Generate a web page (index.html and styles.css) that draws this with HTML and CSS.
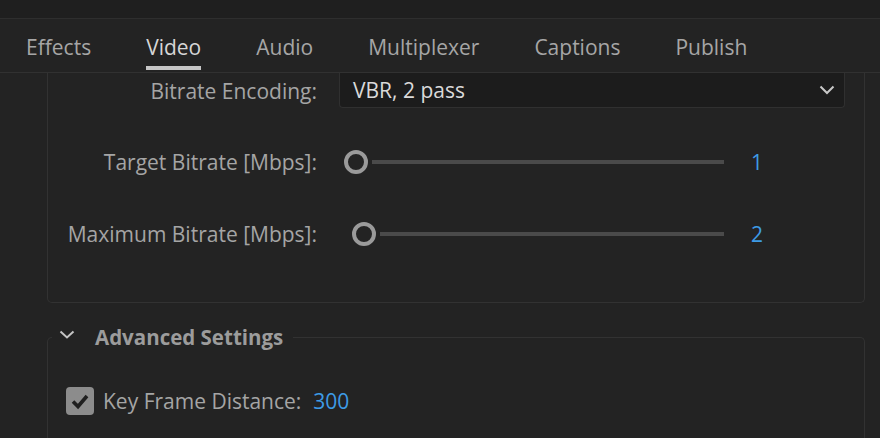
FILE: index.html
```html
<!DOCTYPE html>
<html lang="en">
<head>
    <meta charset="UTF-8">
    <meta name="viewport" content="width=device-width, initial-scale=1.0">
    <title>Export Settings - Video</title>
    <link rel="stylesheet" href="styles.css">
</head>
<body>

    <!-- 顶部条 -->
    <div class="window-top"></div>

    <!-- 选项卡 -->
    <nav class="tabs">
        <span class="tab">Effects</span>
        <span class="tab active">Video</span>
        <span class="tab">Audio</span>
        <span class="tab">Multiplexer</span>
        <span class="tab">Captions</span>
        <span class="tab">Publish</span>
    </nav>

    <div class="content">
        <!-- 码率设置 -->
        <section class="panel">
            <div class="row row-select">
                <label class="label">Bitrate Encoding:</label>
                <div class="select">
                    <span>VBR, 2 pass</span>
                    <svg class="select-arrow" width="16" height="10" viewBox="0 0 16 10">
                        <polyline points="1.5,1.5 8,8 14.5,1.5" fill="none" stroke="#c8c8c8" stroke-width="2"/>
                    </svg>
                </div>
            </div>

            <div class="row row-slider">
                <label class="label">Target Bitrate [Mbps]:</label>
                <div class="slider">
                    <span class="knob" style="margin-left: 0px;"></span>
                    <span class="track"></span>
                </div>
                <span class="value">1</span>
            </div>

            <div class="row row-slider">
                <label class="label">Maximum Bitrate [Mbps]:</label>
                <div class="slider">
                    <span class="knob" style="margin-left: 8px;"></span>
                    <span class="track"></span>
                </div>
                <span class="value">2</span>
            </div>
        </section>

        <!-- 高级设置 -->
        <fieldset class="group">
            <legend class="group-title">
                <svg class="group-arrow" width="16" height="9" viewBox="0 0 16 9">
                    <polyline points="1.5,1.5 8,7.5 14.5,1.5" fill="none" stroke="#c4c4c4" stroke-width="2"/>
                </svg>
                <span>Advanced Settings</span>
            </legend>
            <div class="check-row">
                <span class="checkbox">
                    <svg width="28" height="28" viewBox="0 0 28 28">
                        <polyline points="7,14.5 12,19.5 21,9" fill="none" stroke="#1f1f1f" stroke-width="3.6"/>
                    </svg>
                </span>
                <span class="check-label">Key Frame Distance:</span>
                <span class="value">300</span>
            </div>
        </fieldset>
    </div>

</body>
</html>
```

FILE: styles.css
```css
* {
    margin: 0;
    padding: 0;
    box-sizing: border-box;
}

html, body {
    height: 100%;
    overflow: hidden;
}

body {
    background-color: #232323;
    font-family: "Open Sans", "Noto Sans", sans-serif;
    font-size: 21px;
    color: #a5a5a5;
}

/* 顶部条 */
.window-top {
    height: 19px;
    background-color: #1f1f1f;
    border-bottom: 1px solid #2e2e2e;
}

/* 选项卡 */
.tabs {
    display: flex;
    gap: 55px;
    height: 54px;
    padding-left: 26px;
    border-bottom: 1px solid #313131;
}

.tab {
    display: flex;
    align-items: center;
    padding-top: 9px;
    border-bottom: 4px solid transparent;
    color: #a6a6a6;
    margin-bottom: 2px;
}

.tab.active {
    color: #d6d6d6;
    border-bottom-color: #c6c6c6;
}

/* 内容区 */
.content {
    padding-left: 47px;
    width: 865px;
}

.panel {
    border: 1px solid #323232;
    border-top: none;
    border-radius: 0 0 5px 5px;
    padding-bottom: 56px;
}

.row {
    display: flex;
    align-items: center;
}

.label {
    width: 269px;
    text-align: right;
    flex-shrink: 0;
}

.row-select {
    height: 35px;
}

.select {
    flex: 1;
    height: 35px;
    margin: 0 19px 0 22px;
    display: flex;
    align-items: center;
    justify-content: space-between;
    padding: 0 9px 0 13px;
    background-color: #1c1c1c;
    border: 1px solid #303030;
    border-top: none;
    border-radius: 0 0 4px 4px;
    color: #dadada;
}

.row-slider {
    height: 24px;
    margin-top: 42px;
}

.row-slider + .row-slider {
    margin-top: 48px;
}

.slider {
    display: flex;
    align-items: center;
    gap: 4px;
    width: 380px;
    margin-left: 27px;
}

.knob {
    width: 24px;
    height: 24px;
    border: 4px solid #9a9a9a;
    border-radius: 50%;
    flex-shrink: 0;
}

.track {
    flex: 1;
    height: 4px;
    background-color: #4a4a4a;
}

.value {
    color: #3d9be6;
    margin-left: 27px;
}

/* 高级设置 */
.group {
    margin-top: 20px;
    border: 1px solid #323232;
    border-bottom: none;
    border-radius: 5px 5px 0 0;
    height: 200px;
    padding: 0;
}

.group-title {
    display: flex;
    align-items: center;
    height: 28px;
    margin-left: 4px;
    padding: 0 10px 0 7px;
    font-size: 20.5px;
    font-weight: bold;
    color: #9c9c9c;
}

.group-arrow {
    margin-right: 20px;
    margin-top: -6px;
}

.check-row {
    display: flex;
    align-items: center;
    height: 28px;
    margin-top: 36px;
    padding-left: 18px;
}

.checkbox {
    width: 28px;
    height: 28px;
    background-color: #8c8c8c;
    border-radius: 4px;
    margin-right: 9px;
}

.checkbox svg {
    display: block;
}

.check-row .value {
    margin-left: 12px;
}
```
